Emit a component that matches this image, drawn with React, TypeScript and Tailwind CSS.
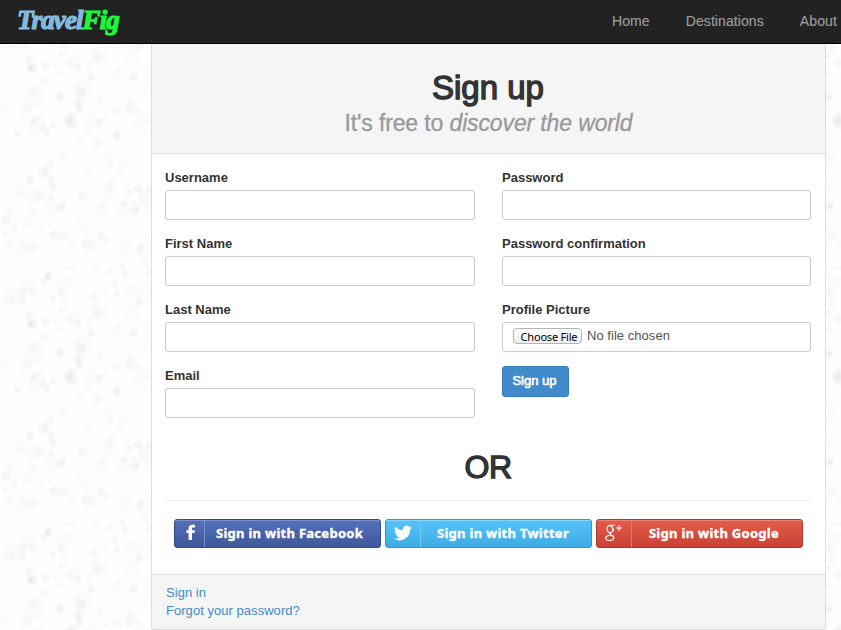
import type { ReactNode } from "react";

type Blob = { x: number; y: number; r: number; o: number };

/* Small seeded generator so that the paper texture is the same on each load. */
function makeBlobs(count: number, minR: number, spanR: number, maxO: number, start: number): Blob[] {
  let seed = start;
  const next = () => {
    seed = (seed * 16807) % 2147483647;
    return seed / 2147483647;
  };
  for (let i = 0; i < 20; i++) next();
  return Array.from({ length: count }, () => ({
    x: 5 + next() * 246,
    y: 5 + next() * 246,
    r: minR + next() * spanR,
    o: 0.008 + next() * maxO,
  }));
}

const blobs = [
  ...makeBlobs(260, 2.4, 2.4, 0.034, 4711),
  ...makeBlobs(90, 5, 6, 0.008, 90210),
];

function PaperTexture() {
  return (
    <svg className="absolute inset-0 h-full w-full" aria-hidden="true">
      <defs>
        <filter id="soft" x="0" y="0" width="100%" height="100%">
          <feGaussianBlur stdDeviation="0.9" />
        </filter>
        <pattern id="paper" width="256" height="256" patternUnits="userSpaceOnUse">
          <g filter="url(#soft)">
            {blobs.map((b, i) => (
              <ellipse key={i} cx={b.x} cy={b.y} rx={b.r} ry={b.r * 1.1} fill="#000" opacity={b.o} />
            ))}
          </g>
        </pattern>
      </defs>
      <rect width="100%" height="100%" fill="#fefefe" />
      <rect width="100%" height="100%" fill="url(#paper)" />
    </svg>
  );
}

function Field({ label, children }: { label: string; children?: ReactNode }) {
  return (
    <label className="block h-[66px]">
      <span className="block h-[21px] text-[13px] leading-[18px] font-bold text-[#333]">{label}</span>
      {children ?? (
        <input className="block h-[30px] w-full rounded-[3px] border border-[#ccc] bg-white px-2.5 outline-none" />
      )}
    </label>
  );
}

function SocialButton({ icon, text, look, divider }: { icon: ReactNode; text: string; look: string; divider: string }) {
  return (
    <button
      className={`flex h-[29px] w-[207px] items-stretch rounded-[3px] border font-['Noto_Sans','Open_Sans',sans-serif] text-[13px] font-bold tracking-[0.28px] text-white [-webkit-text-stroke:0.35px_white] ${look}`}
    >
      <span className={`flex shrink-0 items-center justify-center border-r ${divider}`}>{icon}</span>
      <span className="flex flex-1 items-center justify-center pr-[6px] whitespace-nowrap">{text}</span>
    </button>
  );
}

export default function App() {
  return (
    <div className="relative h-[630px] w-full overflow-hidden bg-white font-['Liberation_Sans',Arial,sans-serif] text-[13px] text-[#333]">
      <PaperTexture />
      <div className="relative">
        <nav className="flex h-[44px] justify-between border-b border-black bg-[#222] pl-[17px]">
          <a className="block w-[104px] font-['Liberation_Serif',serif] text-[27px] leading-[41px] font-bold whitespace-nowrap italic tracking-[-0.9px] text-[#83bbdf] [-webkit-text-stroke:1.2px_#83bbdf]">
            Travel<span className="text-[#1df73b] [-webkit-text-stroke:1.2px_#1df73b]">Fig</span>
          </a>
          <div className="flex w-[229px] shrink-0 gap-[36px] text-[14px] leading-[42px] tracking-[0.09px] whitespace-nowrap text-[#999] [-webkit-text-stroke:0.2px_#999]">
            <a>Home</a>
            <a>Destinations</a>
            <a>About</a>
          </div>
        </nav>

        <main className="ml-[151px] flex h-[586px] w-[675px] flex-col rounded-b-[3px] border border-t-0 border-[#ddd] bg-white">
          <header className="h-[110px] shrink-0 border-b border-[#ddd] bg-[#f5f5f5] pt-[26px] text-center">
            <h1 className="-ml-px text-[33px] leading-[36px] [-webkit-text-stroke:1.4px_#333]">Sign up</h1>
            <p className="text-[23px] leading-[34px] tracking-[-0.13px] text-[#999] [-webkit-text-stroke:0.3px_#999]">
              It's free to <em>discover the world</em>
            </p>
          </header>

          <section className="h-[420px] shrink-0 px-[13px] pt-[15px]">
            <div className="grid h-[264px] grid-cols-[310px_309px] gap-x-[27px]">
              <div>
                <Field label="Username" />
                <Field label="First Name" />
                <Field label="Last Name" />
                <Field label="Email" />
              </div>
              <div>
                <Field label="Password" />
                <Field label="Password confirmation" />
                <Field label="Profile Picture">
                  <div className="flex h-[30px] items-start rounded-[3px] border border-[#ccc] bg-white pt-[5px] pl-[10px]">
                    <span className="flex h-[16px] w-[69px] items-center justify-center rounded-[4px] border border-[#b4b4b4] bg-linear-to-b from-white to-[#eee] pl-[3px] font-['Noto_Sans',sans-serif] text-[11px] leading-none tracking-[-0.2px] whitespace-nowrap text-black">
                      Choose File
                    </span>
                    <span className="ml-[5px] leading-[16px] tracking-[0.04px] text-[#555]">No file chosen</span>
                  </div>
                </Field>
                <button className="-mt-px block h-[31px] w-[67px] rounded-[3px] border border-[#357ebd] bg-[#428bca] pr-[2px] pb-px text-[13px] text-white [-webkit-text-stroke:0.6px_white]">
                  Sign up
                </button>
              </div>
            </div>
            <h2 className="h-[68px] w-[646px] border-b border-[#eee] pt-[16px] text-center text-[32px] leading-[36px] tracking-[-0.6px] [-webkit-text-stroke:1.4px_#333]">
              OR
            </h2>
            <div className="flex gap-[4px] pt-[18px] pl-[9px]">
              <SocialButton
                text="Sign in with Facebook"
                look="border-[#344b88] bg-linear-to-b from-[#5471b9] to-[#40589b] shadow-[inset_0_1px_0_#7890cb]"
                divider="w-[30px] border-[#7c91c7]"
                icon={
                  <svg width="10" height="17" viewBox="0 0 10 17" className="mb-[3px] ml-0.5">
                    <path d="M2.6 16V9H.4V6.2h2.2V4.4C2.6 1.8 4.2.7 6.5.7H9v2.8H7.4C6.2 3.5 6 4 6 4.9v1.3h2.9L8.5 9H6v7z" fill="#fff" />
                  </svg>
                }
              />
              <SocialButton
                text="Sign in with Twitter"
                look="border-[#3796c3] bg-linear-to-b from-[#56c3fa] to-[#3eabe4] shadow-[inset_0_1px_0_#81d6fd]"
                divider="w-[35px] border-[#77cdf5]"
                icon={
                  <svg width="18" height="18" viewBox="0 0 24 24" className="mb-[2px]">
                    <path d="M23.9 4.6a10 10 0 0 1-2.8.8 5 5 0 0 0 2.1-2.7 10 10 0 0 1-3.1 1.2 4.9 4.9 0 0 0-8.4 4.5A14 14 0 0 1 1.6 3.2a4.9 4.9 0 0 0 1.5 6.5 5 5 0 0 1-2.2-.6v.1a5 5 0 0 0 3.9 4.8 5 5 0 0 1-2.2.1 5 5 0 0 0 4.6 3.4A10 10 0 0 1 0 19.5a14 14 0 0 0 21.5-12.4A10 10 0 0 0 23.9 4.6z" fill="#fff" />
                  </svg>
                }
              />
              <SocialButton
                text="Sign in with Google"
                look="border-[#a9382e] bg-linear-to-b from-[#e45c49] to-[#c94134] shadow-[inset_0_1px_0_#ef8272]"
                divider="w-[35px] border-[#df7b6c]"
                icon={
                  <svg width="20" height="22" viewBox="0 0 20 22" fill="none" stroke="#fff" strokeWidth="1.1" className="mb-[2px]">
                    <ellipse cx="6" cy="7.2" rx="2.8" ry="3.6" transform="rotate(-8 6 7.2)" />
                    <path d="M10.8 3.3H6M7.6 10.5c-2.9 1-1.5 1.8.2 2.8 3.1 1.7 2.3 5-1.8 5.2-4.4.2-5.6-3-2.8-4.5 1-.6 2.7-.7 4.2-.7M12 6h6.2M15.1 2.9v6.2" />
                    <path d="M8.4 5.2c.9 1.6.9 3.2.1 4.4M8 13.4c1.8 1 2.2 2.5 1.1 3.7" strokeWidth="1.3" />
                  </svg>
                }
              />
            </div>
          </section>

          <footer className="flex flex-1 flex-col items-start rounded-b-[3px] border-t border-[#ddd] bg-[#f5f5f5] pt-[9px] pl-[14px] leading-[18px] tracking-[0.04px] text-[#428bca]">
            <a>Sign in</a>
            <a>Forgot your password?</a>
          </footer>
        </main>
      </div>
    </div>
  );
}
